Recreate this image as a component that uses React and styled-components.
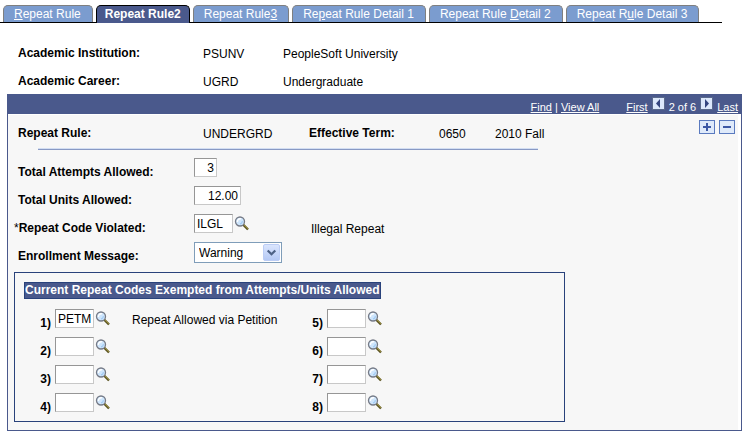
import React, { useState } from 'react';
import styled, { createGlobalStyle, css } from 'styled-components';

const GlobalStyle = createGlobalStyle`
    *{
        box-sizing:border-box;
    }
    body{
        margin:0;
        background:#fff;
        color:#000;
        font:12px/16px "Liberation Sans", Arial, sans-serif;
    }
`;

const Page = styled.main`
    padding:5px 4px 4px 0;
`;

const TabBar = styled.nav`
    display:flex;
    gap:3px;
    margin-right:20px;
    padding-left:3px;
    border-bottom:1px solid #000;
`;

const Tab = styled.a`
    height:17px;
    padding:0 11px 0 10px;
    border:1px solid #7f7f7f;
    border-bottom:0;
    border-radius:5px 5px 0 0;
    background:#7b9ccf;
    color:#fff;
    text-decoration:none;
    white-space:nowrap;
    ${(props) => props.$active && css`
        height:18px;
        margin-bottom:-1px;
        padding:0 8px;
        border-color:#000;
        background:#4a598c;
        font-weight:bold;
    `}
`;

const KeyFields = styled.section`
    padding:23px 0 0 18px;
`;

const KeyRow = styled.div`
    display:grid;
    grid-template-columns:185px 80px auto;
    height:28px;
`;

const Name = styled.span`
    line-height:14px;
    font-weight:bold;
`;

const Panel = styled.section`
    margin:-8px 0 0 7px;
    border:1px solid #4a598c;
    border-top:0;
    background:#fff;
`;

const PanelHeader = styled.header`
    display:flex;
    justify-content:flex-end;
    align-items:flex-start;
    height:20px;
    padding:5px 3px 0 0;
    background:#4a598c;
    color:#fff;
    font-size:11px;
    white-space:pre;
`;

const HeaderLink = styled.a`
    color:#fff;
`;

const Pager = styled.div`
    display:flex;
    gap:4px;
    margin-left:27px;
`;

const PagerButton = styled.button`
    display:flex;
    width:13px;
    height:13px;
    margin-top:-2px;
    padding:0;
    border:1px solid #5a6a8c;
    background:#dce8fb;
`;

const PanelBody = styled.div`
    margin:1px 3px 0 0;
    padding:11px 0 8px 6px;
    background:#f7f7f7;
`;

const RuleRow = styled.div`
    display:flex;
    justify-content:space-between;
    align-items:flex-start;
    height:22px;
    padding-left:4px;
`;

const RuleValues = styled.div`
    display:grid;
    grid-template-columns:185px 106px 130px 56px auto;
`;

const RowActions = styled.div`
    display:flex;
    gap:4px;
    margin-top:-6px;
    padding-right:3px;
`;

const ActionButton = styled.button`
    display:flex;
    width:16px;
    height:14px;
    padding:0;
    border:1px solid #5a7abf;
    background:#dfeafa;
`;

const Divider = styled.hr`
    width:500px;
    max-width:90%;
    height:2px;
    margin:0 0 8px 24px;
    border:0;
    border-top:1px solid #d3def2;
    border-bottom:1px solid #8899c4;
`;

const Field = styled.div`
    display:grid;
    grid-template-columns:180px 117px auto;
    align-items:start;
    height:28px;
`;

const Label = styled.label`
    padding:${(props) => (props.$required ? '7px 0 0' : '7px 0 0 4px')};
    line-height:14px;
    font-weight:bold;
`;

const Star = styled.span`
    font-weight:normal;
`;

const Entry = styled.div`
    display:flex;
    align-items:flex-start;
    gap:1px;
`;

const TextBox = styled.input`
    width:${(props) => props.$width || 39}px;
    height:19px;
    padding:0 2px;
    border:1px solid;
    border-color:#969696 #c8c8c8 #c8c8c8 #969696;
    background:#fff;
    color:#000;
    font:inherit;
    text-align:${(props) => (props.$number ? 'right' : 'left')};
`;

const LookupButton = styled.button`
    display:flex;
    padding:1px 0 0;
    border:0;
    background:none;
`;

const Note = styled.span`
    padding-top:${(props) => (props.$low ? 7 : 3)}px;
`;

const SelectBox = styled.div`
    position:relative;
    width:88px;
`;

const Select = styled.select`
    display:block;
    width:100%;
    height:21px;
    padding:0 20px 0 4px;
    border:1px solid #7f9db9;
    border-radius:0;
    appearance:none;
    background:#fff;
    color:#000;
    font:inherit;
`;

const SelectArrow = styled.svg`
    position:absolute;
    top:2px;
    right:2px;
    pointer-events:none;
`;

const CodeBox = styled.fieldset`
    max-width:551px;
    margin:2px 0 0;
    padding:9px 9px 0;
    border:1px solid #29427b;
`;

const CodeTitle = styled.h2`
    width:fit-content;
    margin:0 0 10px;
    border:1px solid #29427b;
    background:#4a598c;
    color:#fff;
    font-size:12px;
    line-height:15px;
`;

const CodeGrid = styled.div`
    display:grid;
    grid-template-columns:272px auto;
    grid-template-rows:repeat(4, 28px);
    grid-auto-flow:column;
`;

const Code = styled.div`
    display:grid;
    grid-template-columns:27px 73px auto;
    align-items:start;
    column-gap:4px;
`;

const CodeLabel = styled.label`
    padding-top:7px;
    line-height:14px;
    font-weight:bold;
    text-align:right;
`;

const tabs = [
    ['', 'R', 'epeat Rule'],
    ['Repeat Rule2', '', ''],
    ['Repeat Rule', '3', ''],
    ['Re', 'p', 'eat Rule Detail 1'],
    ['Repeat Rule ', 'D', 'etail 2'],
    ['Repeat R', 'u', 'le Detail 3'],
];

const exemptCodes = [
    { code: 'PETM', text: 'Repeat Allowed via Petition' },
    {}, {}, {}, {}, {}, {}, {},
];

const Lookup = ({ label }) => (
    <LookupButton type="button" aria-label={label}>
        <svg width="16" height="16" viewBox="0 0 16 16">
            <path d="M9 9.5l5 5" stroke="#5c5522" strokeWidth="2.4" />
            <path d="M10 9.8l4 3.9" stroke="#a69a45" strokeWidth="1" />
            <circle cx="6" cy="6.5" r="4.5" fill="#cfe6fc" stroke="#757a86" strokeWidth="1.3" />
            <path d="M3.5 7A2.8 2.8 0 0 1 7 3.8" fill="none" stroke="#fff" strokeWidth="1.4" />
            <path d="M8.3 6.1A2.5 2.5 0 0 1 6 8.8" fill="none" stroke="#a4cdf5" strokeWidth="1.4" />
        </svg>
    </LookupButton>
);

const Arrow = ({ d, label }) => (
    <PagerButton type="button" aria-label={label}>
        <svg width="11" height="11" viewBox="0 0 11 11">
            <path d={d} fill="#34457f" />
        </svg>
    </PagerButton>
);

const Sign = ({ d, label }) => (
    <ActionButton type="button" aria-label={label}>
        <svg width="14" height="12" viewBox="0 0 14 12">
            <path d={d} stroke="#3c58a5" strokeWidth="2" />
        </svg>
    </ActionButton>
);

export default function App() {
    const [active, setActive] = useState(1);

    return (
        <>
            <GlobalStyle />
            <Page>
                <TabBar>
                    {tabs.map(([before, key, after], i) => (
                        <Tab key={i} href="#" $active={i === active} onClick={() => setActive(i)}>
                            {before}{key && <u>{key}</u>}{after}
                        </Tab>
                    ))}
                </TabBar>

                <KeyFields>
                    <KeyRow>
                        <Name>Academic Institution:</Name>
                        <span>PSUNV</span>
                        <span>PeopleSoft University</span>
                    </KeyRow>
                    <KeyRow>
                        <Name>Academic Career:</Name>
                        <span>UGRD</span>
                        <span>Undergraduate</span>
                    </KeyRow>
                </KeyFields>

                <Panel>
                    <PanelHeader>
                        <HeaderLink href="#">Find</HeaderLink>
                        {' | '}
                        <HeaderLink href="#">View All</HeaderLink>
                        <Pager>
                            <HeaderLink href="#">First</HeaderLink>
                            <Arrow d="M7 1v9L3 5.5z" label="Previous row" />
                            <span>2 of 6</span>
                            <Arrow d="M4 1v9l4-4.5z" label="Next row" />
                            <HeaderLink href="#">Last</HeaderLink>
                        </Pager>
                    </PanelHeader>

                    <PanelBody>
                        <RuleRow>
                            <RuleValues>
                                <Name>Repeat Rule:</Name>
                                <span>UNDERGRD</span>
                                <Name>Effective Term:</Name>
                                <span>0650</span>
                                <span>2010 Fall</span>
                            </RuleValues>
                            <RowActions>
                                <Sign d="M3 6h8M7 2v8" label="Add row" />
                                <Sign d="M3 6h8" label="Delete row" />
                            </RowActions>
                        </RuleRow>
                        <Divider />

                        <Field>
                            <Label htmlFor="attempts">Total Attempts Allowed:</Label>
                            <Entry><TextBox id="attempts" $width={23} $number defaultValue="3" /></Entry>
                        </Field>
                        <Field>
                            <Label htmlFor="units">Total Units Allowed:</Label>
                            <Entry><TextBox id="units" $width={47} $number defaultValue="12.00" /></Entry>
                        </Field>
                        <Field>
                            <Label htmlFor="violated" $required><Star>*</Star>Repeat Code Violated:</Label>
                            <Entry>
                                <TextBox id="violated" defaultValue="ILGL" />
                                <Lookup label="Look up Repeat Code Violated" />
                            </Entry>
                            <Note $low>Illegal Repeat</Note>
                        </Field>
                        <Field>
                            <Label htmlFor="message">Enrollment Message:</Label>
                            <SelectBox>
                                <Select id="message" defaultValue="Warning">
                                    <option>Warning</option>
                                </Select>
                                <SelectArrow width="17" height="17" viewBox="0 0 17 17">
                                    <defs>
                                        <linearGradient id="arrowFill" x2="0" y2="1">
                                            <stop stopColor="#dbe6fe" />
                                            <stop offset="1" stopColor="#b4c8f4" />
                                        </linearGradient>
                                    </defs>
                                    <rect x=".5" y=".5" width="16" height="16" rx="1.5" fill="url(#arrowFill)" stroke="#bccdf5" />
                                    <path d="M4.7 6.5l3.8 3.8 3.8-3.8" fill="none" stroke="#4d6185" strokeWidth="2.2" />
                                </SelectArrow>
                            </SelectBox>
                        </Field>

                        <CodeBox>
                            <CodeTitle>Current Repeat Codes Exempted from Attempts/Units Allowed</CodeTitle>
                            <CodeGrid>
                                {exemptCodes.map((item, i) => (
                                    <Code key={i}>
                                        <CodeLabel htmlFor={`code${i + 1}`}>{i + 1})</CodeLabel>
                                        <Entry>
                                            <TextBox id={`code${i + 1}`} defaultValue={item.code} />
                                            <Lookup label={`Look up code ${i + 1}`} />
                                        </Entry>
                                        <Note>{item.text}</Note>
                                    </Code>
                                ))}
                            </CodeGrid>
                        </CodeBox>
                    </PanelBody>
                </Panel>
            </Page>
        </>
    );
}
